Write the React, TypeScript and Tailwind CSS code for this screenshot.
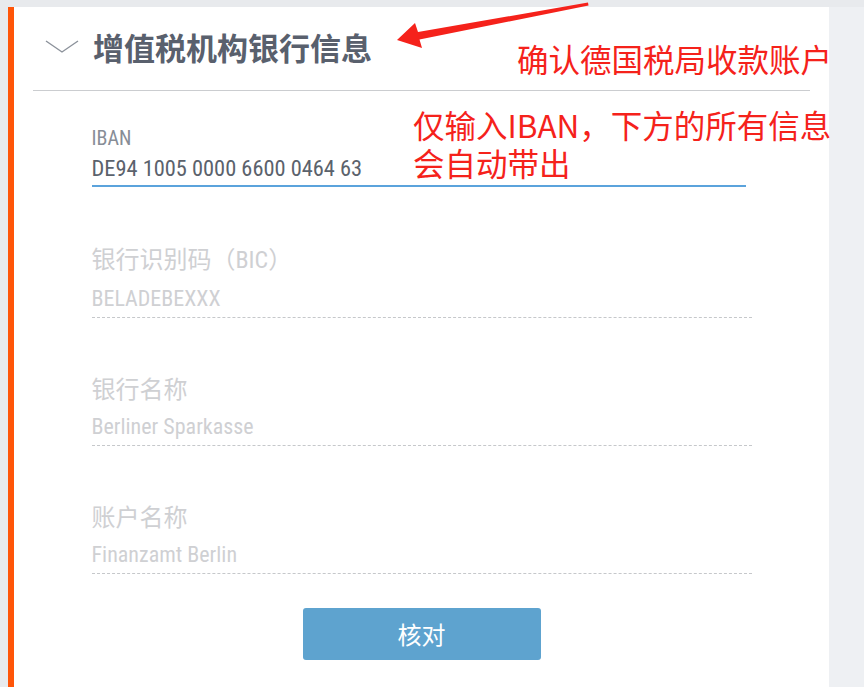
import React from 'react';

const cjk = { fontFamily: '"Noto Sans CJK SC", "Noto Sans", sans-serif' };
const narrow = { fontFamily: '"Roboto Condensed", "Liberation Sans Narrow", "DejaVu Sans Condensed", Roboto, sans-serif' };

interface FieldProps {
  label: React.ReactNode;
  value: string;
  first?: boolean;
}

function ReadonlyField({ label, value, first }: FieldProps) {
  return (
    <div className={first ? 'flex flex-col pt-[56px]' : 'flex flex-col pt-[55px]'}>
      <div className="text-[24px] leading-[30px] text-[#cfd0d3]" style={cjk}>
        {label}
      </div>
      <div className="mt-[11px] h-[32px] border-b border-dashed border-[#c6c8cb] text-[22px] leading-[26px] text-[#cfd0d3]" style={narrow}>
        {value}
      </div>
    </div>
  );
}

function Chevron() {
  return (
    <svg width="34" height="16" viewBox="0 0 34 16" className="shrink-0">
      <polyline points="1,2 17,13 33,2" fill="none" stroke="#8c929b" strokeWidth="1.4" />
    </svg>
  );
}

function RedArrow() {
  return (
    <svg className="absolute left-[390px] top-0 pointer-events-none" width="205" height="55" viewBox="390 0 205 55">
      <polygon
        points="397,40 415,23 418,32 588,2.5 588.5,5.5 419.5,39.5 422,48"
        fill="#f5221b"
      />
    </svg>
  );
}

export default function App() {
  return (
    <div className="relative w-[864px] h-[687px] overflow-hidden bg-[#e8eaed] pt-[7px] pl-[8px] flex">
      {/* accent bar */}
      <div className="w-[6px] bg-[#ff5508] shrink-0" />

      {/* card */}
      <div className="w-[815px] shrink-0 bg-white px-[19px]">
        <div className="h-[84px] flex items-center gap-[14px] pl-[12px] pb-[4px] border-b border-[#cbcdd0]">
          <Chevron />
          <h2 className="text-[31px] font-bold leading-none text-[#59606d]" style={cjk}>
            增值税机构银行信息
          </h2>
        </div>

        <div className="w-[660px] mx-auto flex flex-col">
          <div className="pt-[37px] flex flex-col">
            <div className="text-[20px] leading-[20px] text-[#878d96]" style={narrow}>
              IBAN
            </div>
            <div className="mt-[5px] w-[654px] h-[34px] border-b-2 border-[#5ba3dc] text-[22.4px] leading-[30px] text-[#5b626c]" style={narrow}>
              DE94 1005 0000 6600 0464 63
            </div>
          </div>

          <ReadonlyField
            first
            label={
              <>
                银行识别码（<span style={narrow}>BIC</span>）
              </>
            }
            value="BELADEBEXXX"
          />
          <ReadonlyField label="银行名称" value="Berliner Sparkasse" />
          <ReadonlyField label="账户名称" value="Finanzamt Berlin" />

          <div className="flex justify-center pt-[34px]">
            <button className="w-[238px] h-[52px] rounded-[3px] bg-[#5ea3cf] text-white text-[24px] leading-none" style={cjk}>
              核对
            </button>
          </div>
        </div>
      </div>

      <div className="flex-1 bg-[#eef0f3]" />

      {/* annotations */}
      <RedArrow />
      <div className="absolute left-[517px] top-[42px] text-[31.5px] leading-[32px] text-[#f5221b] whitespace-nowrap" style={cjk}>
        确认德国税局收款账户
      </div>
      <div className="absolute left-[413px] top-[105px] text-[31.5px] leading-[38px] text-[#f5221b] whitespace-nowrap" style={cjk}>
        <div>仅输入IBAN，下方的所有信息</div>
        <div>会自动带出</div>
      </div>
    </div>
  );
}
